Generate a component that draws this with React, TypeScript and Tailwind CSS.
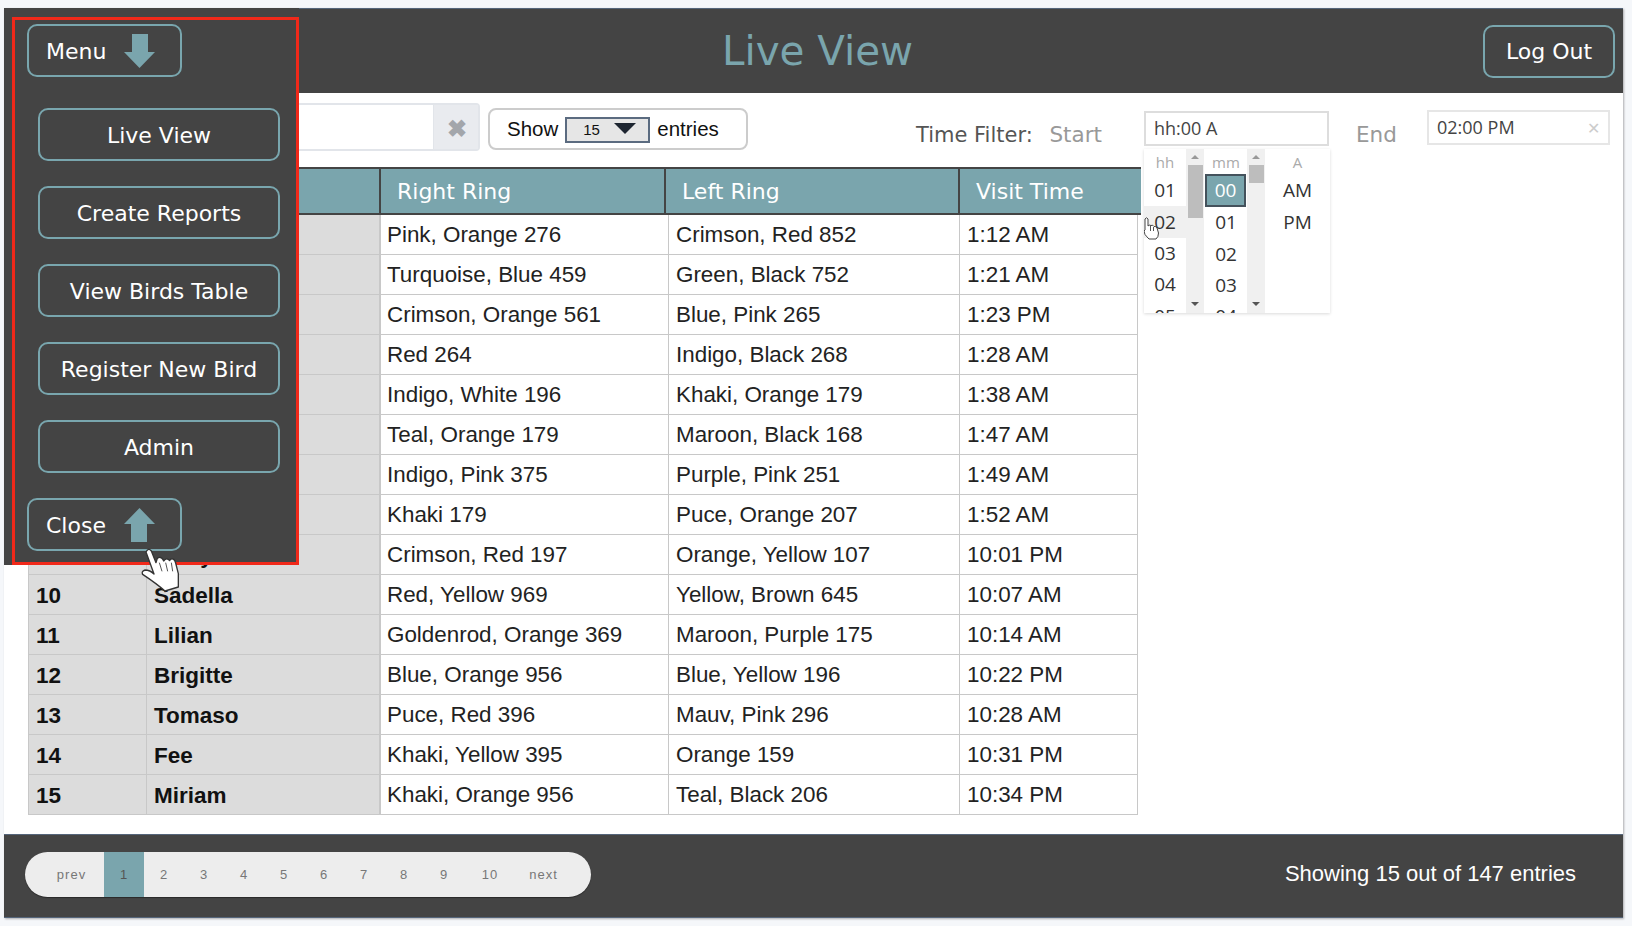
const rows = [
  ["1", "Carlina", "Pink, Orange 276", "Crimson, Red 852", "1:12 AM"],
  ["2", "Oswald", "Turquoise, Blue 459", "Green, Black 752", "1:21 AM"],
  ["3", "Renata", "Crimson, Orange 561", "Blue, Pink 265", "1:23 PM"],
  ["4", "Hedda", "Red 264", "Indigo, Black 268", "1:28 AM"],
  ["5", "Marlo", "Indigo, White 196", "Khaki, Orange 179", "1:38 AM"],
  ["6", "Tobin", "Teal, Orange 179", "Maroon, Black 168", "1:47 AM"],
  ["7", "Annis", "Indigo, Pink 375", "Purple, Pink 251", "1:49 AM"],
  ["8", "Gerard", "Khaki 179", "Puce, Orange 207", "1:52 AM"],
  ["9", "Kerry", "Crimson, Red 197", "Orange, Yellow 107", "10:01 PM"],
  ["10", "Sadella", "Red, Yellow 969", "Yellow, Brown 645", "10:07 AM"],
  ["11", "Lilian", "Goldenrod, Orange 369", "Maroon, Purple 175", "10:14 AM"],
  ["12", "Brigitte", "Blue, Orange 956", "Blue, Yellow 196", "10:22 PM"],
  ["13", "Tomaso", "Puce, Red 396", "Mauv, Pink 296", "10:28 AM"],
  ["14", "Fee", "Khaki, Yellow 395", "Orange 159", "10:31 PM"],
  ["15", "Miriam", "Khaki, Orange 956", "Teal, Black 206", "10:34 PM"],
];

const menuItems = ["Live View", "Create Reports", "View Birds Table", "Register New Bird", "Admin"];
const pages = ["2", "3", "4", "5", "6", "7", "8", "9"];

function ArrowIcon({ up }: { up?: boolean }) {
  return (
    <svg width="31" height="34" viewBox="0 0 31 34" className={up ? "rotate-180" : ""}>
      <path d="M8 0H24V18H31L15.5 34L0 18H8Z" fill="#7aa5ad" />
    </svg>
  );
}

function ToggleButton({ label, up }: { label: string; up?: boolean }) {
  return (
    <div className="flex h-[53px] w-[155px] items-center rounded-[10px] border-2 border-[#79a6ae] pl-[17px] text-[22px] text-white">
      <span className="w-[78px] pt-[1px]">{label}</span>
      <ArrowIcon up={up} />
    </div>
  );
}

function BigHand() {
  return (
    <svg width="40" height="45" viewBox="420 315 120 135" className="absolute left-[140px] top-[547px] z-30">
      <path
        d="M438 330Q445 316 454 327L468 362L472 349Q482 342 489 353L491 357Q500 345 509 356L511 352Q523 347 527 363L535 395L535 435L495 447Q470 425 428 397Q423 388 435 384Q450 384 462 396Z"
        fill="#fff"
        stroke="#333"
        strokeWidth="4"
        strokeLinejoin="round"
      />
      <path d="M478 362L486 388M497 362L503 388M514 362L518 388" stroke="#555" strokeWidth="3" fill="none" />
    </svg>
  );
}

function SmallHand() {
  return (
    <svg width="17" height="24" viewBox="0 0 17 24" className="absolute left-[-1px] top-[67px] z-30">
      <path
        d="M2 14V3Q3.500 0.500 5 3V10Q6 8.500 8 9.500Q10 8.500 11 10.500Q13 10 14 12L15.500 17Q15.500 21 13 23H6Q4 21 2 18.500L1 15Z"
        fill="#fff"
        stroke="#444"
        strokeWidth="1"
      />
      <path d="M7.500 10V15M10.500 11V15" stroke="#555" strokeWidth="1" fill="none" />
    </svg>
  );
}

function PickerScroll({ thumb }: { thumb: string }) {
  return (
    <div className="relative flex w-[18px] flex-col items-center bg-[#f0f0f0]">
      <div className="mt-[6px] h-0 w-0 border-x-[4px] border-b-[4px] border-x-transparent border-b-[#999]" />
      <div className={`mt-[6px] w-[15px] bg-[#bdbdbd] ${thumb}`} />
      <div className="absolute bottom-[7px] h-0 w-0 border-x-[4px] border-t-[4px] border-x-transparent border-t-[#555]" />
    </div>
  );
}

function TimePicker() {
  return (
    <div className="absolute left-[1140px] top-[141px] z-10 flex h-[164px] w-[186px] overflow-hidden bg-white font-['Open_Sans',sans-serif] text-[19px] text-[#333] shadow-[0_1px_3px_rgba(0,0,0,0.15)]">
      <div className="relative w-[42px] overflow-hidden text-center">
        <div className="mb-[3px] h-[23px] text-[15px] leading-[26px] text-[#aaa]">hh</div>
        <div className="flex h-[31.300px] items-center justify-center">01</div>
        <div className="flex h-[31.300px] items-center justify-center bg-[#f0f0f0]">02</div>
        <div className="flex h-[31.300px] items-center justify-center">03</div>
        <div className="flex h-[31.300px] items-center justify-center">04</div>
        <div className="flex h-[31.300px] items-center justify-center">05</div>
        <SmallHand />
      </div>
      <PickerScroll thumb="h-[53px]" />
      <div className="w-[43px] overflow-hidden pl-[1px] text-center">
        <div className="mb-[1px] h-[24px] text-[15px] leading-[26px] text-[#aaa]">mm</div>
        <div className="flex h-[33px] w-[41px] items-center justify-center border-2 border-[#44525c] bg-[#7aa5ad] text-white">00</div>
        <div className="flex h-[31.300px] items-center justify-center">01</div>
        <div className="flex h-[31.300px] items-center justify-center">02</div>
        <div className="flex h-[31.300px] items-center justify-center">03</div>
        <div className="flex h-[31.300px] items-center justify-center">04</div>
      </div>
      <PickerScroll thumb="h-[18px]" />
      <div className="flex-1 text-center">
        <div className="mb-[3px] h-[23px] text-[15px] leading-[26px] text-[#aaa]">A</div>
        <div className="flex h-[31.300px] items-center justify-center">AM</div>
        <div className="flex h-[31.300px] items-center justify-center">PM</div>
      </div>
    </div>
  );
}

export default function App() {
  return (
    <div className="h-[926px] w-[1632px] overflow-hidden bg-[#f5f7fa] pl-[4px] pt-[8px] font-['Liberation_Sans',sans-serif]">
      <div className="relative flex h-[910px] w-[1619px] flex-col bg-white shadow-[1px_1px_2px_rgba(0,0,0,0.3)]">
        {/* top bar */}
        <header className="flex h-[85px] shrink-0 items-center justify-between border-t border-[#55657a] bg-[#444] pl-[23px] pr-[8px] font-['DejaVu_Sans',sans-serif]">
          <div className="w-[155px]" />
          <h1 className="mr-[30px] text-[40.400px] font-normal text-[#7aa5ad]">Live View</h1>
          <div className="flex h-[53px] w-[132px] items-center justify-center rounded-[10px] border-2 border-[#79a6ae] pt-[1px] text-[22px] text-white">
            Log Out
          </div>
        </header>

        <main className="flex-1 pl-[24px]">
          {/* filter row */}
          <div className="flex h-[74px] items-start">
            <div className="mt-[10px] flex h-[48px] w-[452px] shrink-0 rounded-r-[4px] border-2 border-[#e2e5ea]">
              <div className="flex-1" />
              <div className="flex w-[45px] items-center justify-center border-l border-[#e2e5ea] bg-[#e9ebef] pl-[1px] pt-[3px] text-[24px] font-bold text-[#a3a6ab]">
                ✖
              </div>
            </div>
            <div className="ml-[8px] mt-[15px] flex h-[42px] w-[260px] shrink-0 items-center rounded-[8px] border-2 border-[#ccc] pl-[17px] pt-[1px] text-[20.500px] text-[#111]">
              Show
              <div className="relative mx-[7px] mt-[1px] flex h-[26px] w-[85px] items-center border-2 border-[#5b6b80] bg-[#e6e6e6] pl-[16px] text-[15px]">
                15
                <div className="absolute right-[12px] top-[4px] h-0 w-0 border-x-[11px] border-t-[11px] border-x-transparent border-t-[#1d2530]" />
              </div>
              entries
            </div>
            <div className="ml-[168px] mt-[26px] flex w-[186px] shrink-0 items-baseline justify-between whitespace-nowrap font-['DejaVu_Sans',sans-serif] text-[#777]">
              <span className="text-[21px] text-[#555]">Time Filter:</span>
              <span className="text-[21.500px] text-[#999]">Start</span>
            </div>
            <div className="ml-[42px] mt-[18px] flex h-[35px] w-[185px] shrink-0 items-center border-2 border-[#ddd] pl-[8px] font-['Open_Sans',sans-serif] text-[18px] text-[#444]">
              hh:00 A
            </div>
            <div className="ml-[27px] mt-[26px] w-[41px] shrink-0 font-['DejaVu_Sans',sans-serif] text-[21.500px] text-[#999]">End</div>
            <div className="ml-[30px] mt-[17px] flex h-[35px] w-[183px] shrink-0 items-center justify-between border-2 border-[#e6e6e6] px-[8px] font-['Open_Sans',sans-serif] text-[18px] text-[#444]">
              02:00 PM
              <span className="text-[16px] text-[#ccc]">✕</span>
            </div>
          </div>

          {/* bird visits */}
          <div className="flex h-[48px] w-[1113px] border-y-2 border-[#444] bg-[#7aa5ad] font-['DejaVu_Sans',sans-serif] text-[22px] text-white">
            <div className="w-[353px] shrink-0 border-r-2 border-[#444]" />
            <div className="flex w-[285px] shrink-0 items-center border-r-2 border-[#444] pl-[16px] pt-[1px]">Right Ring</div>
            <div className="flex w-[294px] shrink-0 items-center border-r-2 border-[#444] pl-[16px] pt-[1px]">Left Ring</div>
            <div className="flex flex-1 items-center pl-[16px] pt-[1px]">Visit Time</div>
          </div>
          {rows.map((r) => (
            <div key={r[0]} className="flex h-[40px] w-[1110px] border-b border-[#c8c8c8] text-[22.400px] text-[#222]">
              <div className="flex w-[119px] shrink-0 items-center border-x border-[#c8c8c8] bg-[#dcdcdc] pl-[7px] pt-[2px] text-[22.500px] font-bold text-[#111]">{r[0]}</div>
              <div className="flex w-[234px] shrink-0 items-center border-r-2 border-[#c8c8c8] bg-[#dcdcdc] pl-[7px] pt-[2px] text-[22.500px] font-bold text-[#111]">{r[1]}</div>
              <div className="flex w-[288px] shrink-0 items-center border-r border-[#c8c8c8] pl-[6px]">{r[2]}</div>
              <div className="flex w-[291px] shrink-0 items-center border-r border-[#c8c8c8] pl-[7px]">{r[3]}</div>
              <div className="flex flex-1 items-center border-r border-[#c8c8c8] pl-[7px]">{r[4]}</div>
            </div>
          ))}
        </main>

        {/* bottom bar */}
        <footer className="flex h-[84px] shrink-0 items-center justify-between border-y border-[#55657a] bg-[#444] pb-[4px] pl-[21px] pr-[47px]">
          <div className="flex h-[45px] w-[566px] items-center overflow-hidden rounded-full bg-[#ededed] pt-[1px] text-[13px] tracking-[1px] text-[#777] shadow-[0_1px_1px_rgba(0,0,0,0.4)]">
            <div className="w-[79px] pl-[14px] text-center">prev</div>
            <div className="-mt-[1px] flex h-[45px] w-[40px] items-center justify-center bg-[#7aa5ad] pt-[1px] text-[#555]">1</div>
            {pages.map((p) => (
              <div key={p} className="w-[40px] text-center">{p}</div>
            ))}
            <div className="w-[52px] text-center">10</div>
            <div className="w-[55px] text-center">next</div>
          </div>
          <div className="mb-[1px] text-[22px] text-white">Showing 15 out of 147 entries</div>
        </footer>

        <TimePicker />

        {/* open menu, outlined in red */}
        <div className="absolute left-0 top-0 z-20 h-[557px] w-[295px] bg-[#444] pl-[8px] pt-[9px] font-['DejaVu_Sans',sans-serif]">
          <div className="flex h-[548px] w-[287px] flex-col border-[3px] border-[#f0291a] pl-[12px] pt-[4px]">
            <ToggleButton label="Menu" />
            <div className="ml-[11px] mt-[31px] flex flex-col gap-[25px]">
              {menuItems.map((item) => (
                <div key={item} className="flex h-[53px] w-[242px] items-center justify-center rounded-[10px] border-2 border-[#79a6ae] pt-[1px] text-[22px] text-white">
                  {item}
                </div>
              ))}
            </div>
            <div className="mt-[25px]">
              <ToggleButton label="Close" up />
            </div>
          </div>
        </div>
      </div>
      <BigHand />
    </div>
  );
}
